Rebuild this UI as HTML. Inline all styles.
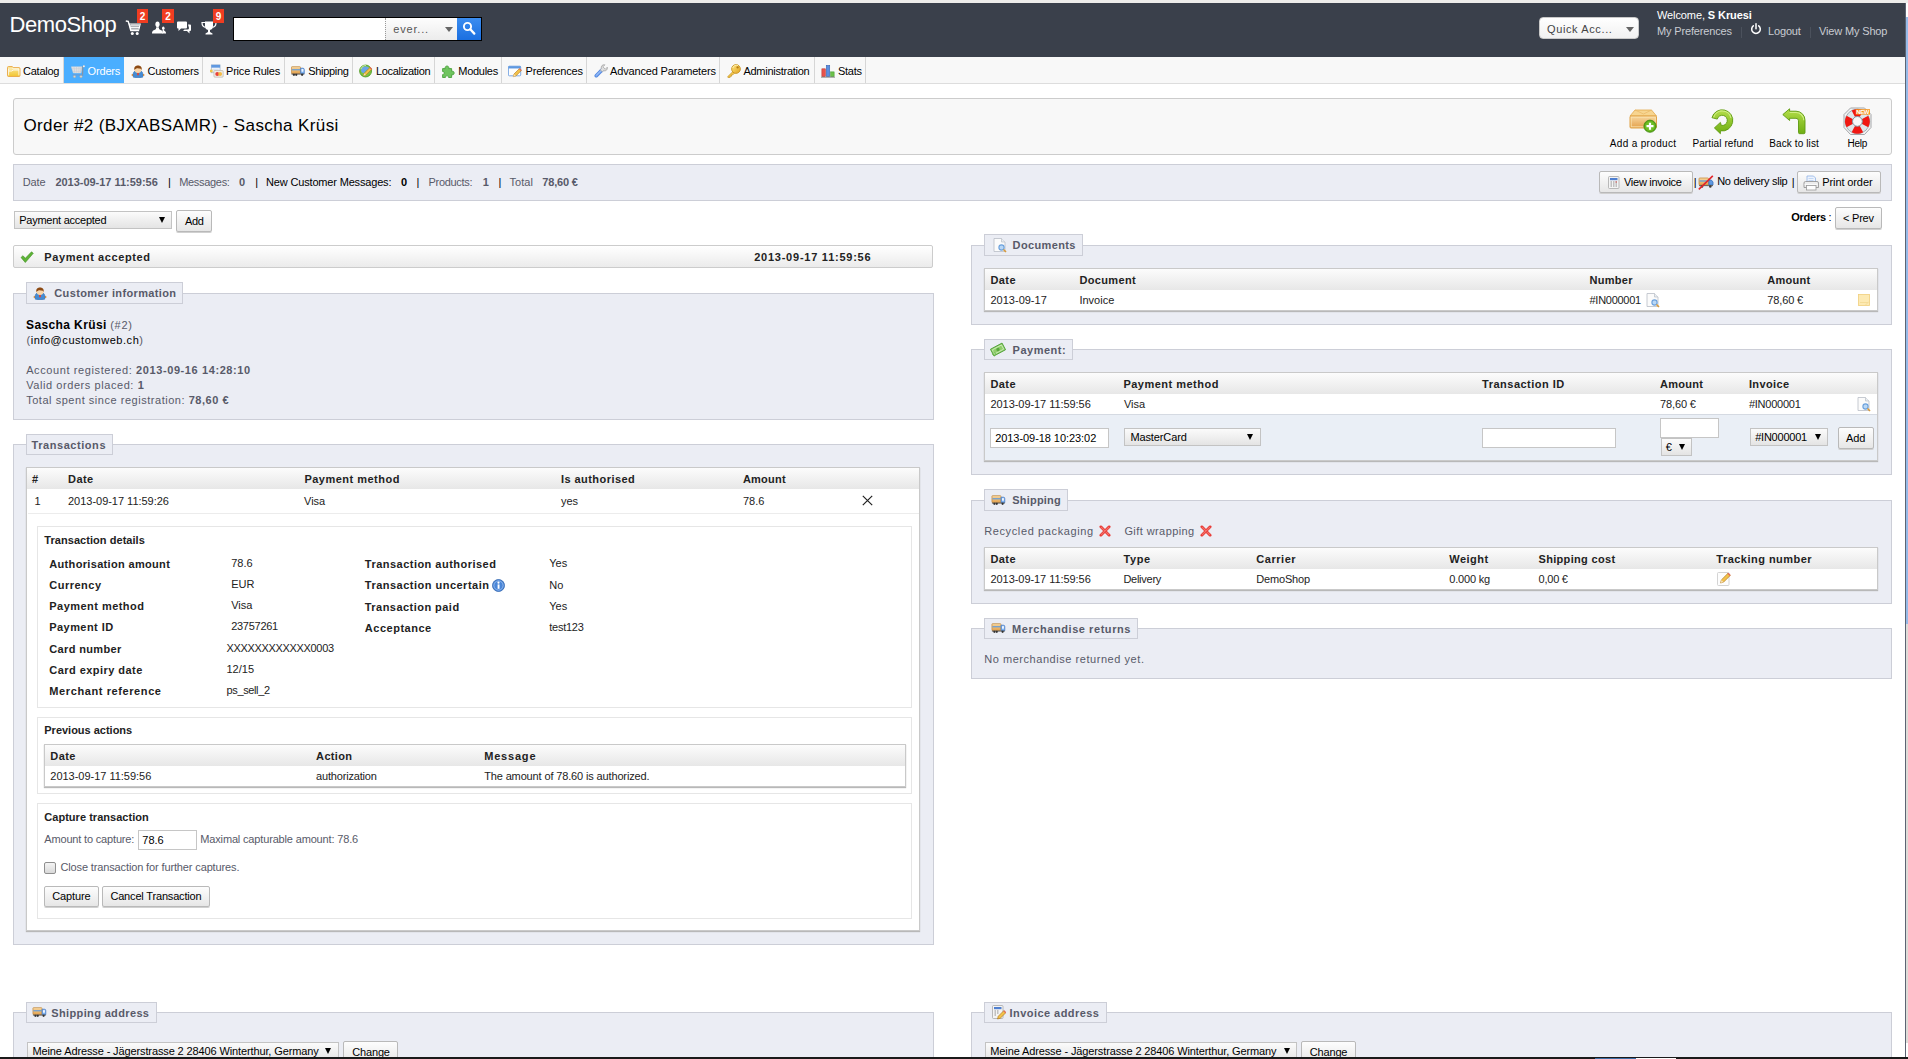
<!DOCTYPE html>
<html>
<head>
<meta charset="utf-8">
<title>Orders - DemoShop</title>
<style>
html,body{margin:0;padding:0}
html{width:1908px;height:1059px;overflow:hidden}
body{width:1908px;height:1059px;overflow:hidden;position:relative;background:#fff;font-family:"Liberation Sans",sans-serif;font-size:12px;color:#000;line-height:1}
*{box-sizing:border-box}
.a{position:absolute}
.t{position:absolute;white-space:nowrap;line-height:14px}
b{font-weight:bold}
/* frame */
#topband{left:0;top:0;width:1908px;height:3px;background:#edecea}
#botband{left:0;top:1057px;width:1908px;height:2px;background:#1a1a1a;z-index:50}
#sbline{left:1905px;top:3px;width:1px;height:1054px;background:#5c6573;z-index:40}
#sbthumb{left:1906px;top:17px;width:2px;height:607px;background:#96bae8;z-index:40}
#sbtrack{left:1906px;top:3px;width:2px;height:1054px;background:#dedcd8;z-index:39}
#sbtop{left:1906px;top:3px;width:2px;height:14px;background:#fff;z-index:41}
#sbbot{left:1906px;top:1043px;width:2px;height:14px;background:#fff;z-index:41}
/* header */
#header{left:0;top:3px;width:1905px;height:54px;background:#3a404b}
#shopname{left:9px;top:11px;font-size:23px;line-height:28px;color:#fff;letter-spacing:-0.9px}
.badge{background:#f03d21;color:#fff;font-weight:bold;font-size:10px;line-height:16px;text-align:center;width:11px;height:14px}
#search{left:233px;top:17px;width:249px;height:24px;background:#fff;border:1px solid #000}
#searchsel{left:385px;top:18px;width:72px;height:22px;background:linear-gradient(#fdfdfd,#ececec);border-left:1px dotted #999}
#searchbtn{left:457px;top:18px;width:24px;height:22px;background:linear-gradient(#3b8df0,#1a6fe0)}
#quick{left:1539px;top:17px;width:100px;height:22px;background:linear-gradient(#fff,#f1f1f1);border:1px solid #c9c9c9;border-radius:4px}
.hl{color:#c9ccd2;font-size:11px;letter-spacing:-0.15px}
/* nav */
#nav{left:0;top:57px;width:1905px;height:27px;background:#f8f8f8;border-bottom:1px solid #dddddd}
.tab{position:absolute;top:57px;height:26px;border-right:1px solid #d4d4d4}
.tab span{position:absolute;top:7px;font-size:12px;line-height:14px;letter-spacing:-0.45px;white-space:nowrap;color:#000}
.tab svg{position:absolute;top:5px}
.nv{}
/* boxes */
.box{position:absolute;background:#ebedf4;border:1px solid #ccced7}
.legend{position:absolute;background:#ebedf4;border:1px solid #ccced7;height:22px}
.legend span{position:absolute;top:3px;font-size:13px;line-height:15px;font-weight:bold;color:#585a69;white-space:nowrap}
.tbl{position:absolute;background:#fff;border:1px solid #c9c9c9;box-shadow:0 1px 1px #b8b8b8}
.th{position:absolute;left:0;top:0;right:0;height:22px;background:linear-gradient(#fbfbfb,#e8e8e8)}
.th span{position:absolute;top:5px;font-weight:bold;font-size:12px;line-height:14px;color:#222;white-space:nowrap}
.td{position:absolute;font-size:11px;line-height:13px;color:#222;white-space:nowrap}
.gt{color:#585a69}
.btn{position:absolute;background:linear-gradient(#fdfdfd,#e6e6e6);border:1px solid #b9b9b9;border-radius:2px;font-size:11px;color:#000;text-align:center;white-space:nowrap;box-shadow:0 1px 0 #d0d0d0}
.sel{position:absolute;background:linear-gradient(#fbfbfb,#e4e4e4);border:1px solid #c3c3c3;font-size:11px;color:#000;white-space:nowrap}
.sel i{position:absolute;right:5px;top:5px;width:0;height:0;border-left:4px solid transparent;border-right:4px solid transparent;border-top:7px solid #000}
.inp{position:absolute;background:#fff;border:1px solid #c6c6c6;font-size:11px;color:#000;white-space:nowrap}
.sub{position:absolute;background:#fff;border:1px solid #e6e6e6}
</style>
</head>
<body>
<div id="wrap" style="position:absolute;left:0;top:0;width:1908px;height:1059px;overflow:hidden">
<svg width="0" height="0" style="position:absolute;left:-10px;top:-10px">
<defs>
<linearGradient id="gFold" x1="0" y1="0" x2="0" y2="1"><stop offset="0" stop-color="#fbe9a0"/><stop offset="1" stop-color="#f2c530"/></linearGradient>
<linearGradient id="gBox" x1="0" y1="0" x2="0" y2="1"><stop offset="0" stop-color="#f8d8a2"/><stop offset="1" stop-color="#e3a04a"/></linearGradient>
<linearGradient id="gGreen" x1="0" y1="0" x2="0" y2="1"><stop offset="0" stop-color="#b4de4a"/><stop offset="1" stop-color="#6fae12"/></linearGradient>
<linearGradient id="gKey" x1="0" y1="0" x2="1" y2="1"><stop offset="0" stop-color="#ffe680"/><stop offset="1" stop-color="#e0a321"/></linearGradient>
<linearGradient id="gWr" x1="0" y1="0" x2="1" y2="1"><stop offset="0" stop-color="#c6dbf3"/><stop offset="1" stop-color="#5b8fd4"/></linearGradient>
<linearGradient id="gTh" x1="0" y1="0" x2="0" y2="1"><stop offset="0" stop-color="#fbfbfb"/><stop offset="1" stop-color="#e8e8e8"/></linearGradient>

<!-- folder -->
<symbol id="i-folder" viewBox="0 0 14 11">
<path d="M0.500 1.500 Q0.500 0.500 1.500 0.500 H5.300 L6.300 1.600 H12 Q13 1.600 13 2.600 V9.500 Q13 10.500 12 10.500 H1.500 Q0.500 10.500 0.500 9.500 Z" fill="url(#gFold)" stroke="#e9a746" stroke-width=".9"/>
<path d="M1.600 9.400 V2.800 H11.900 V9.400" fill="none" stroke="#ffffff" stroke-width=".9" opacity=".9"/>
<path d="M1.800 5 H5 L6 4 H11.800" fill="none" stroke="#ffffff" stroke-width=".9" opacity=".9"/>
<path d="M2 2.200 H5" stroke="#fbe08a" stroke-width=".8"/>
</symbol>
<!-- cart (menu) -->
<symbol id="i-cart" viewBox="0 0 14 13">
<path d="M0.300 1.800 H11 L10 8 H2.300 Z" fill="#e6e7e9" stroke="#cdd0d4" stroke-width=".5"/>
<path d="M0.800 3.400 H10.700 M1.300 5 H10.400 M1.800 6.600 H10.200 M3 2 L3.800 8 M5.500 2 L5.800 8 M8 2 L7.800 8 M10 2 L9.300 8" stroke="#c2c6cc" stroke-width=".5" fill="none"/>
<path d="M13.600 0.700 L11.900 1.700 L11.500 10.600" fill="none" stroke="#8793a1" stroke-width="1.200"/>
<circle cx="12.900" cy="1.300" r="1" fill="#f3f1ee"/>
<path d="M1.500 9.200 H11.600 V10.500 H1.500 Z" fill="#6a9cd6" opacity=".85"/>
<circle cx="3.500" cy="11.600" r="1.200" fill="#ddd6cb" stroke="#a9a399" stroke-width=".4"/>
<circle cx="10" cy="11.600" r="1.200" fill="#ddd6cb" stroke="#a9a399" stroke-width=".4"/>
</symbol>
<!-- user -->
<symbol id="i-user" viewBox="0 0 14 13">
<circle cx="1.600" cy="10" r="1.100" fill="#f0922a"/><circle cx="12.400" cy="10" r="1.100" fill="#f0922a"/>
<path d="M2.300 12.200 C1.500 9 2.500 6.600 4 6 H10 C11.500 6.600 12.500 9 11.700 12.200 Q7 13.200 2.300 12.200 Z" fill="#468bd2" stroke="#2e6db2" stroke-width=".5"/>
<path d="M6.400 6.300 H7.600 L8 9.500 L7 10.800 L6 9.500 Z" fill="#d94a3c"/>
<circle cx="7" cy="4.300" r="3.600" fill="#f8d5aa"/>
<path d="M3.400 4.900 C2.800 1.500 5 0.400 7 0.400 C9 0.400 11.200 1.500 10.600 4.900 C10 3.700 9 3.300 8 3.700 C7 2.900 5 3.100 3.400 4.900 Z" fill="#8c4a14"/>
</symbol>
<!-- price rules -->
<symbol id="i-price" viewBox="0 0 16 16">
<rect x="1.500" y="1" width="10" height="9" fill="#f4f7fb" stroke="#9fb3cc" stroke-width=".8"/>
<rect x="1.500" y="1" width="10" height="3.200" fill="#5f98e0"/>
<path d="M3 6h7M3 8h7" stroke="#c9d6e6" stroke-width=".8"/>
<rect x="0" y="6.500" width="3" height="3" fill="#f0c64a"/>
<rect x="4.500" y="7.500" width="10.500" height="7.500" rx="1" fill="#f2efe9" stroke="#b8b1a5" stroke-width=".8"/>
<circle cx="8.300" cy="11.300" r="2.300" fill="#e8413a"/>
<circle cx="11.500" cy="11.300" r="2.300" fill="#f4b536" opacity=".9"/>
</symbol>
<!-- lorry -->
<symbol id="i-lorry" viewBox="0 0 16 16">
<rect x="0.500" y="3" width="10.300" height="8" rx=".8" fill="url(#gBox)" stroke="#c08a44" stroke-width=".8"/>
<path d="M1 6.600h9.300" stroke="#5b9be0" stroke-width="1.300"/>
<path d="M11 4.800 h2.600 a1.600 1.600 0 0 1 1.600 1.600 v4.600 h-4.200z" fill="#7db1f0" stroke="#3f74be" stroke-width=".8"/>
<rect x="12" y="5.800" width="2.200" height="3" rx=".4" fill="#eef6ff"/>
<rect x="0.500" y="11" width="14.700" height="1" fill="#4a4a4a"/>
<circle cx="3.300" cy="12.300" r="1.300" fill="#333"/><circle cx="6" cy="12.300" r="1.300" fill="#333"/><circle cx="12.700" cy="12.300" r="1.300" fill="#333"/>
</symbol>
<!-- world + pencil -->
<symbol id="i-world" viewBox="0 0 16 16">
<circle cx="7.500" cy="8" r="6.800" fill="#7cc242" stroke="#4e9a22" stroke-width="1"/>
<path d="M3 5 c2 -3 7 -3 9 0 c-1 2 -3 1 -4 3 s-2 3 -4 2 s-2 -3 -1 -5z" fill="#6aa5e6"/>
<path d="M2 6 c1 -3 4 -4.500 6 -4.500" stroke="#d9f2b8" stroke-width="1" fill="none"/>
<path d="M5 13.500 l1 -3 l6.500 -6.500 l2 2 l-6.500 6.500z" fill="#f3c24a" stroke="#b07a1e" stroke-width=".7"/>
<path d="M5 13.500 l1 -3 l2 2z" fill="#f6dfb5"/>
<path d="M12.500 4 l2 2" stroke="#e36b5a" stroke-width="1.500"/>
</symbol>
<!-- puzzle -->
<symbol id="i-puzzle" viewBox="0 0 14 13">
<path d="M0.600 3.600 H3.300 C2.200 0.200 7.800 0.200 6.700 3.600 H9.600 V6.300 C13 5.200 13 10.800 9.600 9.700 V12.500 H6.600 C7.400 10.300 2.600 10.300 3.400 12.500 H0.600 V9.600 C2.700 10.400 2.700 5.700 0.600 6.500 Z" fill="#6fc45f" stroke="#49a13c" stroke-width=".9" stroke-linejoin="round"/>
</symbol>
<!-- preferences -->
<symbol id="i-prefs" viewBox="0 0 16 16">
<rect x="0.500" y="2.500" width="14" height="11" rx="1" fill="#fdfdfd" stroke="#6e9fe0" stroke-width="1"/>
<rect x="0.500" y="2.500" width="14" height="2.600" fill="#5f98e0"/>
<path d="M6 14.500 l.8 -3 l6.200 -6.200 l2.200 2.200 l-6.200 6.200z" fill="#f3c24a" stroke="#b07a1e" stroke-width=".7"/>
<path d="M6 14.500 l.8 -3 l2.200 2.200z" fill="#f6dfb5"/>
<path d="M13 5.300 l2.200 2.200" stroke="#e36b5a" stroke-width="1.500"/>
</symbol>
<!-- wrench -->
<symbol id="i-wrench" viewBox="0 0 14 14">
<path d="M2.300 11.700 L8.200 5.800" stroke="#4f83dc" stroke-width="3.600" stroke-linecap="round"/>
<path d="M2.300 11.700 L8.200 5.800" stroke="#6fa0ee" stroke-width="2.400" stroke-linecap="round"/>
<path d="M2.600 11 L7.600 6" stroke="#b5d0f8" stroke-width=".9" stroke-linecap="round"/>
<path d="M13.300 3.200 L11.300 5.200 L8.900 2.800 L10.900 0.800 C8.600 0.200 6.600 2.200 7.300 4.600 L6.200 5.700 L8.400 7.900 L9.500 6.800 C11.900 7.500 13.900 5.500 13.300 3.200 Z" fill="#dedede" stroke="#9c9c9c" stroke-width=".7" stroke-linejoin="round"/>
</symbol>
<!-- key -->
<symbol id="i-key" viewBox="0 0 14 14">
<path d="M6 7.400 L0.900 12.500 V13.400 H3.100 V12.200 H4.500 V10.800 H5.900 L7.600 9.100 Z" fill="#f3c84c" stroke="#c48f1d" stroke-width=".7" stroke-linejoin="round"/>
<circle cx="9" cy="5" r="4.400" fill="url(#gKey)" stroke="#c48f1d" stroke-width=".8"/>
<path d="M5.800 4 A3.600 3.600 0 0 1 11 1.700" fill="none" stroke="#fff3b8" stroke-width=".9"/>
<circle cx="10.600" cy="3.400" r="1.150" fill="#b57c12"/>
</symbol>
<!-- chart bars -->
<symbol id="i-chart" viewBox="0 0 16 16">
<rect x="1" y="5.500" width="4" height="9" fill="#e8524c" stroke="#b8322c" stroke-width=".6"/>
<rect x="6" y="1.500" width="4" height="13" fill="#5a8fe0" stroke="#355fae" stroke-width=".6"/>
<rect x="11" y="9" width="4" height="5.500" fill="#6cc04a" stroke="#3f9a2a" stroke-width=".6"/>
<path d="M0 15 h16" stroke="#777" stroke-width="1"/>
</symbol>

<!-- add product (32x26) origin 1628,108 -->
<symbol id="i-addprod" viewBox="0 0 32 26">
<path d="M7 2 h16.500 l5 6 h-26.500z" fill="#f7d590" stroke="#e2a84c" stroke-width=".8"/>
<path d="M7 2 l8.500 4 l8 -4" fill="none" stroke="#e9b866" stroke-width=".7"/>
<rect x="2" y="8" width="26.500" height="12" rx="1" fill="url(#gBox)" stroke="#e0a346" stroke-width="1"/>
<rect x="3.200" y="9.200" width="24" height="9.600" fill="none" stroke="#fbe3b0" stroke-width=".8"/>
<circle cx="22" cy="18.200" r="6.100" fill="#5aa817" stroke="#3f8a0e" stroke-width=".8"/>
<circle cx="22" cy="18.200" r="5" fill="#6fbe24"/>
<path d="M22 14.700v7M18.500 18.200h7" stroke="#fff" stroke-width="2.200"/>
</symbol>
<!-- partial refund (28x28) origin 1708,107 -->
<symbol id="i-refund" viewBox="0 0 28 28">
<path d="M3.960 10.660 A10.600 10.600 0 1 1 12.360 23.840 L12.400 26.700 L6.400 20.900 L12.400 15.400 L13.310 18.420 A5.100 5.100 0 1 0 9.270 12.080 Z" fill="url(#gGreen)" stroke="#5e9a10" stroke-width=".9" stroke-linejoin="round"/>
<path d="M5.600 10.300 A9 9 0 0 1 23 11" fill="none" stroke="#d8f392" stroke-width="1.100" opacity=".85"/>
</symbol>
<!-- back to list (28x28) origin 1780,107 -->
<symbol id="i-back" viewBox="0 0 28 28">
<path d="M2.800 7.600 L9.600 1.800 V4.200 H16 A9 9 0 0 1 25 13.200 V25.500 A1.200 1.200 0 0 1 23.800 26.700 H19.700 A1.200 1.200 0 0 1 18.500 25.500 V13.800 A2.500 2.500 0 0 0 16 11.300 H9.600 V13.500 Z" fill="url(#gGreen)" stroke="#5e9a10" stroke-width=".9" stroke-linejoin="round"/>
<path d="M9.600 5.500 H16 A7.700 7.700 0 0 1 23.700 13.200" fill="none" stroke="#d8f392" stroke-width="1.100" opacity=".85"/>
</symbol>
<!-- help (29x28) origin 1843,107 -->
<symbol id="i-help" viewBox="0 0 29 28">
<path d="M7.500 1 H21.500 L28 7.500 V20.500 L21.500 27.500 H7.500 L1 20.500 V7.500 Z" fill="#f3f3f3" stroke="#a4a6a9" stroke-width="1" stroke-linejoin="round"/>
<circle cx="14.400" cy="14.400" r="12.300" fill="#dfe6e9" stroke="#8fa3ab" stroke-width=".8"/>
<g fill="#f01812">
<path d="M14.4 14.4 L25.26 8.63 A12.3 12.3 0 0 1 25.26 20.17z"/>
<path d="M14.4 14.4 L20.17 25.26 A12.3 12.3 0 0 1 8.63 25.26z"/>
<path d="M14.4 14.4 L3.54 20.17 A12.3 12.3 0 0 1 3.54 8.63z"/>
<path d="M14.4 14.4 L8.63 3.54 A12.3 12.3 0 0 1 20.17 3.54z"/>
</g>
<circle cx="14.400" cy="14.400" r="4.900" fill="#f8f8f8" stroke="#7f9ea9" stroke-width="1"/>
<rect x="12.700" y="2.200" width="14.300" height="5.400" fill="#f7941d"/>
<text x="13.300" y="7" font-family="Liberation Sans" font-weight="bold" font-size="6" fill="#fff" textLength="13">NEW</text>
</symbol>
<!-- calculator/invoice small (12x13) -->
<symbol id="i-calc" viewBox="0 0 12 13">
<rect x=".5" y=".5" width="10.500" height="12" rx="1" fill="#f4f4f4" stroke="#aaa" stroke-width=".8"/>
<rect x="2" y="2" width="7.500" height="2.200" fill="#4f7fd0"/>
<path d="M2.500 6h1.500M5 6h1.500M7.500 6h1.500M2.500 8h1.500M5 8h1.500M7.500 8h1.500M2.500 10h1.500M5 10h1.500M7.500 10h1.500" stroke="#8d8d8d" stroke-width="1.200"/>
<path d="M7.500 6h1.500" stroke="#d9534f" stroke-width="1.200"/>
</symbol>
<!-- lorry with red slash (16x15) -->
<symbol id="i-nolorry" viewBox="0 0 16 15">
<rect x="1" y="3" width="9.500" height="7" rx=".8" fill="url(#gBox)" stroke="#c98d3c" stroke-width=".8"/>
<path d="M1.500 6h8.500" stroke="#5b9be0" stroke-width="1.200"/>
<path d="M10.800 5 h2.500 l1.700 2 v3 h-4.200z" fill="#5e99e2" stroke="#3a6fb8" stroke-width=".8"/>
<rect x="1" y="10.200" width="14" height=".9" fill="#555"/>
<circle cx="4" cy="11.500" r="1.300" fill="#3b3b3b"/><circle cx="12.300" cy="11.500" r="1.300" fill="#3b3b3b"/>
<path d="M.8 14.300 L14.800 .8" stroke="#e3262b" stroke-width="1.600"/>
</symbol>
<!-- printer 16 -->
<symbol id="i-printer" viewBox="0 0 16 16">
<path d="M4 1 h6.500 l2 2 v5 h-8.500z" fill="#eef4fd" stroke="#8fb2e6" stroke-width=".8"/>
<path d="M5.500 3.500h5M5.500 5.500h5" stroke="#b8d0f2" stroke-width=".8"/>
<path d="M1 8 a1.500 1.500 0 0 1 1.500 -1.500 h11.500 a1.500 1.500 0 0 1 1.500 1.500 v4.500 h-14.500z" fill="#ededed" stroke="#8d8d8d" stroke-width=".8"/>
<rect x="3.500" y="10.500" width="9.500" height="4.500" fill="#fdfdfd" stroke="#9a9a9a" stroke-width=".8"/>
<path d="M1.500 9.500h13" stroke="#fff" stroke-width=".7"/>
</symbol>

<!-- green check 14x12 -->
<symbol id="i-check" viewBox="0 0 14 12">
<path d="M1 6.500 l2 -1.800 l2.300 2.600 l6.200 -6.500 l1.800 1.500 l-8 9.200z" fill="#5db336" stroke="#3f8f22" stroke-width=".6" stroke-linejoin="round"/>
</symbol>
<!-- thin black close X -->
<symbol id="i-close" viewBox="0 0 11 11" preserveAspectRatio="none">
<path d="M.8 .8 L10.200 10.200 M10.200 .8 L.8 10.200" stroke="#222" stroke-width="1.200"/>
</symbol>
<!-- info -->
<symbol id="i-info" viewBox="0 0 13 13">
<circle cx="6.500" cy="6.500" r="6" fill="#4a86d8" stroke="#2f63ad" stroke-width=".8"/>
<circle cx="6.500" cy="6.500" r="4.600" fill="none" stroke="#a9c9f2" stroke-width=".7"/>
<rect x="5.600" y="5.400" width="1.900" height="4.400" fill="#fff"/><circle cx="6.500" cy="3.700" r="1.100" fill="#fff"/>
</symbol>

<!-- page with magnifier 14x15 -->
<symbol id="i-pagefind" viewBox="0 0 14 15">
<path d="M1 .5 h7.500 l3.500 3.500 v9.500 h-11z" fill="#fbfbfb" stroke="#b9bec6" stroke-width=".8"/>
<path d="M8.500 .5 v3.500 h3.500" fill="#e9edf2" stroke="#b9bec6" stroke-width=".7"/>
<circle cx="8.500" cy="9.500" r="2.600" fill="#b9d7f5" stroke="#6aa0dc" stroke-width="1.100"/>
<path d="M10.500 11.500 l2.500 2.500" stroke="#d89a3c" stroke-width="1.600"/>
</symbol>
<!-- note -->
<symbol id="i-note" viewBox="0 0 12 12">
<rect x=".5" y=".5" width="11" height="11" fill="#fdeab3" stroke="#f0cf7c" stroke-width=".8"/>
<path d="M2 8.500 h8 M7.500 11 l3.500 -3.500" stroke="#f5dc98" stroke-width="1"/>
</symbol>
<!-- money -->
<symbol id="i-money" viewBox="0 0 16 16">
<g transform="rotate(-28 8 8)">
<rect x="1" y="4" width="14" height="8" fill="#8fce6a" stroke="#4f9e36" stroke-width=".9"/>
<rect x="2.500" y="5.500" width="11" height="5" fill="none" stroke="#d6f0c4" stroke-width=".8"/>
<circle cx="8" cy="8" r="1.800" fill="#5aa83e"/>
</g>
<path d="M1.500 12.500 l3 2.500 M3 10.500 l3.500 3" stroke="#6db74e" stroke-width="1"/>
</symbol>
<!-- red X -->
<symbol id="i-redx" viewBox="0 0 13 13">
<path d="M2 2 L11 11 M11 2 L2 11" stroke="#e83b36" stroke-width="3" stroke-linecap="round"/>
<path d="M2.500 2.500 L10.500 10.500 M10.500 2.500 L2.500 10.500" stroke="#f4716a" stroke-width="1.200" stroke-linecap="round"/>
</symbol>
<!-- pencil on page -->
<symbol id="i-pencil" viewBox="0 0 14 15">
<rect x=".5" y="1.500" width="11.500" height="13" rx="1" fill="#fdfdfd" stroke="#c9c9c9" stroke-width=".8"/>
<path d="M3.500 12 l.9 -3.100 l6.600 -6.600 l2.200 2.200 l-6.600 6.600z" fill="#f3c24a" stroke="#b07a1e" stroke-width=".7"/>
<path d="M3.500 12 l.9 -3.100 l2.200 2.200z" fill="#f6dfb5"/>
<path d="M11 2.300 l2.200 2.200" stroke="#e36b5a" stroke-width="1.400"/>
</symbol>
<!-- invoice edit -->
<symbol id="i-invedit" viewBox="0 0 14 15">
<rect x=".5" y=".5" width="10.500" height="13" rx="1" fill="#f4f4f4" stroke="#aaa" stroke-width=".8"/>
<rect x="2" y="2" width="7.500" height="2.200" fill="#4f7fd0"/>
<path d="M2.500 6h1.500M5 6h1.500M2.500 8h1.500M5 8h1.500M2.500 10h1.500" stroke="#8d8d8d" stroke-width="1.200"/>
<path d="M5.500 14 l.8 -2.800 l5.500 -5.500 l2 2 l-5.500 5.500z" fill="#f3c24a" stroke="#b07a1e" stroke-width=".7"/>
<path d="M11.800 5.700 l2 2" stroke="#e36b5a" stroke-width="1.400"/>
</symbol>
<!--MORE-SYMBOLS-->



</defs>
</svg>
<!-- window frame -->
<div id="topband" class="a"></div>
<div id="header" class="a"></div>
<div id="nav" class="a"></div>

<!-- HEADER CONTENT -->
<div class="t" style="left:9.4px;top:11px;font-size:22px;color:#fff;letter-spacing:-0.39px;line-height:28px;">DemoShop</div>
<!-- header notification icons -->
<svg class="a" style="left:125px;top:20px" width="16" height="16" viewBox="0 0 16 16"><path d="M0.800 1 L3.200 1.300 L5.800 10.600 H14.200" fill="none" stroke="#fff" stroke-width="1.400"/><path d="M4.400 4 H15.200 L14 9.200 H5.800 Z" fill="none" stroke="#fff" stroke-width="1.100"/><path d="M7 4v5.200M9 4v5.200M11 4v5.200M13 4v5.200M4.800 5.800h10M5.300 7.500h9.200" stroke="#fff" stroke-width=".9"/><circle cx="7.300" cy="13.600" r="1.500" fill="#fff"/><circle cx="12.200" cy="13.600" r="1.500" fill="#fff"/></svg>
<div class="a badge" style="left:137px;top:9px">2</div>
<svg class="a" style="left:151px;top:20px" width="16" height="16" viewBox="0 0 16 16"><ellipse cx="6.500" cy="4.300" rx="2.100" ry="2.800" fill="#fff"/><path d="M1 13.400 C1 10.600 3 10.200 4.800 9.300 L5.300 7.300 H7.700 L8.200 9.300 C10 10.200 12 10.600 12 13.400 Z" fill="#fff"/><ellipse cx="12.300" cy="8.300" rx="1.300" ry="1.700" fill="#fff"/><path d="M11.200 13.400 C11.800 12 11.200 11 11.700 10 H12.900 C13.200 11 15.100 11.300 15.100 13.400 Z" fill="#fff"/></svg>
<div class="a badge" style="left:162px;top:9px;width:12px">2</div>
<svg class="a" style="left:176px;top:21px" width="16" height="14" viewBox="0 0 16 14"><path d="M1 1.500a1 1 0 0 1 1-1h8a1 1 0 0 1 1 1v5a1 1 0 0 1-1 1h-5l-2.500 2.500v-2.500h-.5a1 1 0 0 1-1-1z" fill="#fff"/><path d="M12 3.500h2a1 1 0 0 1 1 1v4.500a1 1 0 0 1-1 1h-.5v2.500l-2.500-2.500h-4l1.500-1.500h3a1.500 1.500 0 0 0 1.500-1.500z" fill="#fff"/></svg>
<svg class="a" style="left:201px;top:20px" width="16" height="16" viewBox="0 0 16 16"><path d="M4 1.500h8v4.500a4 4 0 0 1-8 0z" fill="#fff"/><path d="M4 2.500h-3c0 3 1.500 4.500 3.500 5M12 2.500h3c0 3-1.500 4.500-3.500 5" fill="none" stroke="#fff" stroke-width="1.200"/><path d="M7 9.500h2v2.500l2.500 1.500v1h-7v-1l2.500-1.500z" fill="#fff"/></svg>
<div class="a badge" style="left:213px;top:9px">9</div>

<div id="search" class="a"></div>
<div id="searchsel" class="a"></div>
<div class="t" style="left:393.2px;top:22px;font-size:11px;color:#555;letter-spacing:0.82px;">ever...</div>
<div class="a" style="left:445px;top:27px;width:0;height:0;border-left:4px solid transparent;border-right:4px solid transparent;border-top:5px solid #666"></div>
<div id="searchbtn" class="a"></div>
<svg class="a" style="left:462px;top:21px" width="14" height="15" viewBox="0 0 14 15"><circle cx="5.500" cy="5.500" r="3.600" fill="none" stroke="#fff" stroke-width="1.900"/><path d="M8.300 8.300l4 4.300" stroke="#fff" stroke-width="2.300" stroke-linecap="round"/></svg>
<div id="quick" class="a"></div>
<div class="t" style="left:1547.0px;top:22px;font-size:11px;color:#444;letter-spacing:0.62px;">Quick Acc...</div>
<div class="a" style="left:1626px;top:27px;width:0;height:0;border-left:4px solid transparent;border-right:4px solid transparent;border-top:5px solid #666"></div>
<div class="t" style="left:1657px;top:8px;font-size:11px;color:#fff;letter-spacing:-0.1px">Welcome, <b>S Kruesi</b></div>
<div class="t hl" style="left:1657px;top:24px">My Preferences</div>
<div class="a" style="left:1741px;top:27px;width:1px;height:11px;background:#4b515c"></div>
<svg class="a" style="left:1750px;top:23px" width="12" height="13" viewBox="0 0 12 13"><path d="M3.300 2.800a4.300 4.300 0 1 0 5.400 0" fill="none" stroke="#fff" stroke-width="1.500" stroke-linecap="round"/><path d="M6 0.800v5" stroke="#fff" stroke-width="1.500" stroke-linecap="round"/></svg>
<div class="t hl" style="left:1768px;top:24px">Logout</div>
<div class="a" style="left:1810px;top:27px;width:1px;height:11px;background:#4b515c"></div>
<div class="t hl" style="left:1819px;top:24px">View My Shop</div>
<!-- NAV TABS -->
<div class="a" style="left:64px;top:57px;width:60px;height:26px;background:#4aaeff"></div>
<svg class="a" style="left:6.5px;top:65.7px" width="14" height="11"><use href="#i-folder"/></svg><div class="t nv" style="left:23.0px;top:64px;font-size:11px;color:#000;letter-spacing:-0.24px;text-shadow:0 1px 0 #fff;">Catalog</div>
<div class="a" style="left:63px;top:57px;width:1px;height:26px;background:#d6d6d6"></div>
<svg class="a" style="left:71px;top:64.5px" width="14" height="13"><use href="#i-cart"/></svg><div class="t nv" style="left:87.6px;top:64px;font-size:11px;color:#fff;letter-spacing:-0.18px;text-shadow:none;">Orders</div>
<svg class="a" style="left:131px;top:64.5px" width="14" height="13"><use href="#i-user"/></svg><div class="t nv" style="left:147.4px;top:64px;font-size:11px;color:#000;letter-spacing:-0.20px;text-shadow:0 1px 0 #fff;">Customers</div>
<div class="a" style="left:202px;top:57px;width:1px;height:26px;background:#d6d6d6"></div>
<svg class="a" style="left:209.6px;top:64px" width="14" height="14"><use href="#i-price"/></svg><div class="t nv" style="left:226.0px;top:64px;font-size:11px;color:#000;letter-spacing:-0.20px;text-shadow:0 1px 0 #fff;">Price Rules</div>
<div class="a" style="left:284px;top:57px;width:1px;height:26px;background:#d6d6d6"></div>
<svg class="a" style="left:290.5px;top:64px" width="14" height="14"><use href="#i-lorry"/></svg><div class="t nv" style="left:308.2px;top:64px;font-size:11px;color:#000;letter-spacing:-0.29px;text-shadow:0 1px 0 #fff;">Shipping</div>
<div class="a" style="left:352px;top:57px;width:1px;height:26px;background:#d6d6d6"></div>
<svg class="a" style="left:359.3px;top:64px" width="14" height="14"><use href="#i-world"/></svg><div class="t nv" style="left:376.0px;top:64px;font-size:11px;color:#000;letter-spacing:-0.32px;text-shadow:0 1px 0 #fff;">Localization</div>
<div class="a" style="left:434px;top:57px;width:1px;height:26px;background:#d6d6d6"></div>
<svg class="a" style="left:441.5px;top:64.5px" width="14" height="13"><use href="#i-puzzle"/></svg><div class="t nv" style="left:458.3px;top:64px;font-size:11px;color:#000;letter-spacing:-0.28px;text-shadow:0 1px 0 #fff;">Modules</div>
<div class="a" style="left:501px;top:57px;width:1px;height:26px;background:#d6d6d6"></div>
<svg class="a" style="left:508px;top:64px" width="14" height="14"><use href="#i-prefs"/></svg><div class="t nv" style="left:525.5px;top:64px;font-size:11px;color:#000;letter-spacing:-0.18px;text-shadow:0 1px 0 #fff;">Preferences</div>
<div class="a" style="left:586px;top:57px;width:1px;height:26px;background:#d6d6d6"></div>
<svg class="a" style="left:593.5px;top:64px" width="14" height="14"><use href="#i-wrench"/></svg><div class="t nv" style="left:610.0px;top:64px;font-size:11px;color:#000;letter-spacing:-0.16px;text-shadow:0 1px 0 #fff;">Advanced Parameters</div>
<div class="a" style="left:719px;top:57px;width:1px;height:26px;background:#d6d6d6"></div>
<svg class="a" style="left:726.8px;top:64px" width="14" height="14"><use href="#i-key"/></svg><div class="t nv" style="left:743.4px;top:64px;font-size:11px;color:#000;letter-spacing:-0.26px;text-shadow:0 1px 0 #fff;">Administration</div>
<div class="a" style="left:814px;top:57px;width:1px;height:26px;background:#d6d6d6"></div>
<svg class="a" style="left:820.8px;top:64px" width="14" height="14"><use href="#i-chart"/></svg><div class="t nv" style="left:838.0px;top:64px;font-size:11px;color:#000;letter-spacing:-0.27px;text-shadow:0 1px 0 #fff;">Stats</div>
<div class="a" style="left:865px;top:57px;width:1px;height:26px;background:#d6d6d6"></div>
<!-- CONTENT TOP -->
<div class="a" style="left:13px;top:98px;width:1879px;height:57px;background:#f8f8f8;border:1px solid #cccccc;border-radius:3px"></div>
<div class="t" style="left:23.4px;top:116px;font-size:17px;color:#000;letter-spacing:0.40px;line-height:20px;">Order #2 (BJXABSAMR) - Sascha Krüsi</div>
<svg class="a" style="left:1628px;top:108px" width="32" height="26"><use href="#i-addprod"/></svg>
<div class="t" style="left:1609.8px;top:137px;font-size:10px;color:#000;letter-spacing:0.33px;">Add a product</div>
<svg class="a" style="left:1708px;top:107px" width="28" height="28"><use href="#i-refund"/></svg>
<div class="t" style="left:1692.4px;top:137px;font-size:10px;color:#000;letter-spacing:0.11px;">Partial refund</div>
<svg class="a" style="left:1780px;top:107px" width="28" height="28"><use href="#i-back"/></svg>
<div class="t" style="left:1769.2px;top:137px;font-size:10px;color:#000;letter-spacing:0.12px;">Back to list</div>
<svg class="a" style="left:1843px;top:107px" width="29" height="28"><use href="#i-help"/></svg>
<div class="t" style="left:1847.5px;top:137px;font-size:10px;color:#000;letter-spacing:-0.26px;">Help</div>
<div class="a" style="left:13px;top:164px;width:1879px;height:37px;background:#ebedf4;border:1px solid #ccced7"></div>
<div class="t" style="left:22.8px;top:175px;font-size:11px;color:#585a69;letter-spacing:-0.14px;">Date</div>
<div class="t" style="left:55.4px;top:175px;font-size:11px;font-weight:bold;color:#585a69;letter-spacing:-0.02px;">2013-09-17 11:59:56</div>
<div class="t" style="left:168.0px;top:175px;font-size:11px;color:#000;">|</div>
<div class="t" style="left:179.2px;top:175px;font-size:11px;color:#585a69;letter-spacing:-0.31px;">Messages:</div>
<div class="t" style="left:239.0px;top:175px;font-size:11px;font-weight:bold;color:#585a69;">0</div>
<div class="t" style="left:255.2px;top:175px;font-size:11px;color:#000;">|</div>
<div class="t" style="left:266.1px;top:175px;font-size:11px;color:#000;letter-spacing:-0.17px;">New Customer Messages:</div>
<div class="t" style="left:401.0px;top:175px;font-size:11px;font-weight:bold;color:#000;">0</div>
<div class="t" style="left:416.5px;top:175px;font-size:11px;color:#000;">|</div>
<div class="t" style="left:428.5px;top:175px;font-size:11px;color:#585a69;letter-spacing:-0.31px;">Products:</div>
<div class="t" style="left:482.8px;top:175px;font-size:11px;font-weight:bold;color:#585a69;">1</div>
<div class="t" style="left:498.5px;top:175px;font-size:11px;color:#000;">|</div>
<div class="t" style="left:509.4px;top:175px;font-size:11px;color:#585a69;letter-spacing:0.09px;">Total</div>
<div class="t" style="left:542.3px;top:175px;font-size:11px;font-weight:bold;color:#585a69;letter-spacing:-0.18px;">78,60 €</div>
<div class="btn" style="left:1599px;top:171px;width:94px;height:22px;"></div>
<svg class="a" style="left:1608px;top:176px" width="12" height="13"><use href="#i-calc"/></svg>
<div class="t" style="left:1624.0px;top:175px;font-size:11px;color:#000;letter-spacing:-0.27px;">View invoice</div>
<div class="t" style="left:1693.8px;top:175px;font-size:11px;color:#000;">|</div>
<svg class="a" style="left:1698px;top:175px" width="16" height="15"><use href="#i-nolorry"/></svg>
<div class="t" style="left:1717.2px;top:174px;font-size:11px;color:#000;letter-spacing:-0.27px;">No delivery slip</div>
<div class="t" style="left:1791.8px;top:175px;font-size:11px;color:#000;">|</div>
<div class="btn" style="left:1797px;top:171px;width:84px;height:22px;"></div>
<svg class="a" style="left:1803px;top:175px" width="16" height="16"><use href="#i-printer"/></svg>
<div class="t" style="left:1822.3px;top:175px;font-size:11px;color:#000;letter-spacing:-0.11px;">Print order</div>
<div class="sel" style="left:14px;top:211px;width:158px;height:18px;"></div>
<div class="t" style="left:19.3px;top:213px;font-size:11px;color:#000;letter-spacing:-0.26px;">Payment accepted</div>
<div class="a" style="left:159px;top:217px;width:8px;height:6px;background:none;width:0;height:0;border-left:3.500px solid transparent;border-right:3.500px solid transparent;border-top:6px solid #000"></div>
<div class="btn" style="left:176px;top:210px;width:36px;height:22px;"></div>
<div class="t" style="left:185.0px;top:214px;font-size:11px;color:#000;letter-spacing:-0.34px;">Add</div>
<div class="t" style="left:1791.3px;top:210px;font-size:11px;color:#000;letter-spacing:-0.27px;"><span style="font-weight:bold;">Orders</span> :</div>
<div class="btn" style="left:1835px;top:207px;width:47px;height:22px;"></div>
<div class="t" style="left:1843.0px;top:211px;font-size:11px;color:#000;letter-spacing:-0.22px;">&lt; Prev</div>
<!-- LEFT COLUMN -->
<div class="a" style="left:13px;top:245px;width:920px;height:23px;background:linear-gradient(#ffffff,#ebebeb);border:1px solid #cccccc;border-radius:2px"></div>
<svg class="a" style="left:20px;top:251px" width="14" height="12"><use href="#i-check"/></svg>
<div class="t" style="left:44.3px;top:250px;font-size:11px;font-weight:bold;color:#222;letter-spacing:0.61px;">Payment accepted</div>
<div class="t" style="left:754.2px;top:250px;font-size:11px;font-weight:bold;color:#222;letter-spacing:0.76px;">2013-09-17 11:59:56</div>
<div class="box" style="left:13px;top:293px;width:921px;height:127px;"></div>
<div class="legend" style="left:26px;top:282px;width:157px;height:22px;"></div>
<svg class="a" style="left:33px;top:286.5px" width="14" height="13"><use href="#i-user"/></svg>
<div class="t" style="left:54.3px;top:286px;font-size:11px;font-weight:bold;color:#585a69;letter-spacing:0.36px;">Customer information</div>
<div class="t" style="left:26.0px;top:318px;font-size:12px;font-weight:bold;color:#000;letter-spacing:0.39px;">Sascha Krüsi</div>
<div class="t" style="left:110.2px;top:318px;font-size:11px;color:#585a69;letter-spacing:0.71px;">(#2)</div>
<div class="t" style="left:26.4px;top:333px;font-size:11px;color:#000;letter-spacing:0.56px;"><span style="color:#585a69;">(</span><span style="color:#000;">info@customweb.ch</span><span style="color:#585a69;">)</span></div>
<div class="t" style="left:26.2px;top:363px;font-size:11px;color:#585a69;letter-spacing:0.60px;">Account registered: <span style="font-weight:bold;">2013-09-16 14:28:10</span></div>
<div class="t" style="left:26.2px;top:378px;font-size:11px;color:#585a69;letter-spacing:0.57px;">Valid orders placed: <span style="font-weight:bold;">1</span></div>
<div class="t" style="left:26.2px;top:393px;font-size:11px;color:#585a69;letter-spacing:0.53px;">Total spent since registration: <span style="font-weight:bold;">78,60 €</span></div>
<div class="box" style="left:13px;top:444px;width:921px;height:501px;"></div>
<div class="legend" style="left:26px;top:434px;width:87px;height:21px;"></div>
<div class="t" style="left:31.5px;top:438px;font-size:11px;font-weight:bold;color:#585a69;letter-spacing:0.56px;">Transactions</div>
<div class="tbl" style="left:26px;top:467px;width:894px;height:464px;"></div>
<div class="a" style="left:27px;top:468px;width:892px;height:21px;background:linear-gradient(#fcfcfc,#e7e7e7)"></div>
<div class="t" style="left:31.9px;top:472px;font-size:11px;font-weight:bold;color:#222;letter-spacing:0.50px;">#</div>
<div class="t" style="left:68.1px;top:472px;font-size:11px;font-weight:bold;color:#222;letter-spacing:0.39px;">Date</div>
<div class="t" style="left:304.4px;top:472px;font-size:11px;font-weight:bold;color:#222;letter-spacing:0.49px;">Payment method</div>
<div class="t" style="left:561.0px;top:472px;font-size:11px;font-weight:bold;color:#222;letter-spacing:0.44px;">Is authorised</div>
<div class="t" style="left:742.9px;top:472px;font-size:11px;font-weight:bold;color:#222;letter-spacing:0.25px;">Amount</div>
<div class="a" style="left:28px;top:513px;width:891px;height:1px;background:#ececec"></div>
<div class="t" style="left:34.6px;top:494px;font-size:11px;color:#222;">1</div>
<div class="t" style="left:68.0px;top:494px;font-size:11px;color:#222;letter-spacing:-0.02px;">2013-09-17 11:59:26</div>
<div class="t" style="left:304.0px;top:494px;font-size:11px;color:#222;">Visa</div>
<div class="t" style="left:561.0px;top:494px;font-size:11px;color:#222;">yes</div>
<div class="t" style="left:743.0px;top:494px;font-size:11px;color:#222;">78.6</div>
<svg class="a" style="left:861.5px;top:495.3px" width="11" height="11"><use href="#i-close"/></svg>
<div class="sub" style="left:37px;top:526px;width:875px;height:182px;"></div>
<div class="t" style="left:44.3px;top:533px;font-size:11px;font-weight:bold;color:#222;letter-spacing:0.05px;">Transaction details</div>
<div class="t" style="left:49.3px;top:557px;font-size:11px;font-weight:bold;color:#222;letter-spacing:0.33px;">Authorisation amount</div>
<div class="t" style="left:231.2px;top:556px;font-size:11px;color:#222;">78.6</div>
<div class="t" style="left:49.3px;top:578px;font-size:11px;font-weight:bold;color:#222;letter-spacing:0.49px;">Currency</div>
<div class="t" style="left:231.2px;top:577px;font-size:11px;color:#222;">EUR</div>
<div class="t" style="left:49.3px;top:599px;font-size:11px;font-weight:bold;color:#222;letter-spacing:0.46px;">Payment method</div>
<div class="t" style="left:231.2px;top:598px;font-size:11px;color:#222;">Visa</div>
<div class="t" style="left:49.3px;top:620px;font-size:11px;font-weight:bold;color:#222;letter-spacing:0.43px;">Payment ID</div>
<div class="t" style="left:231.2px;top:619px;font-size:11px;color:#222;letter-spacing:-0.28px;">23757261</div>
<div class="t" style="left:49.3px;top:642px;font-size:11px;font-weight:bold;color:#222;letter-spacing:0.36px;">Card number</div>
<div class="t" style="left:226.5px;top:641px;font-size:11px;color:#222;letter-spacing:-0.33px;">XXXXXXXXXXXX0003</div>
<div class="t" style="left:49.3px;top:663px;font-size:11px;font-weight:bold;color:#222;letter-spacing:0.45px;">Card expiry date</div>
<div class="t" style="left:226.5px;top:662px;font-size:11px;color:#222;">12/15</div>
<div class="t" style="left:49.3px;top:684px;font-size:11px;font-weight:bold;color:#222;letter-spacing:0.60px;">Merchant reference</div>
<div class="t" style="left:226.5px;top:683px;font-size:11px;color:#222;letter-spacing:-0.37px;">ps_sell_2</div>
<div class="t" style="left:364.8px;top:557px;font-size:11px;font-weight:bold;color:#222;letter-spacing:0.48px;">Transaction authorised</div>
<div class="t" style="left:549.3px;top:556px;font-size:11px;color:#222;">Yes</div>
<div class="t" style="left:364.8px;top:578px;font-size:11px;font-weight:bold;color:#222;letter-spacing:0.49px;">Transaction uncertain</div>
<div class="t" style="left:549.3px;top:578px;font-size:11px;color:#222;">No</div>
<div class="t" style="left:364.8px;top:600px;font-size:11px;font-weight:bold;color:#222;letter-spacing:0.46px;">Transaction paid</div>
<div class="t" style="left:549.3px;top:599px;font-size:11px;color:#222;">Yes</div>
<div class="t" style="left:364.8px;top:621px;font-size:11px;font-weight:bold;color:#222;letter-spacing:0.52px;">Acceptance</div>
<div class="t" style="left:549.3px;top:620px;font-size:11px;color:#222;letter-spacing:-0.26px;">test123</div>
<svg class="a" style="left:492px;top:579px" width="13" height="13"><use href="#i-info"/></svg>
<div class="sub" style="left:37px;top:717px;width:875px;height:77px;"></div>
<div class="t" style="left:44.3px;top:723px;font-size:11px;font-weight:bold;color:#222;letter-spacing:-0.01px;">Previous actions</div>
<div class="tbl" style="left:44px;top:744px;width:862px;height:43px;"></div>
<div class="a" style="left:45px;top:745px;width:860px;height:21px;background:linear-gradient(#fcfcfc,#e7e7e7)"></div>
<div class="t" style="left:50.3px;top:749px;font-size:11px;font-weight:bold;color:#222;letter-spacing:0.39px;">Date</div>
<div class="t" style="left:316.1px;top:749px;font-size:11px;font-weight:bold;color:#222;letter-spacing:0.34px;">Action</div>
<div class="t" style="left:484.2px;top:749px;font-size:11px;font-weight:bold;color:#222;letter-spacing:0.81px;">Message</div>
<div class="t" style="left:50.3px;top:769px;font-size:11px;color:#222;letter-spacing:-0.02px;">2013-09-17 11:59:56</div>
<div class="t" style="left:316.1px;top:769px;font-size:11px;color:#222;letter-spacing:-0.19px;">authorization</div>
<div class="t" style="left:484.2px;top:769px;font-size:11px;color:#222;letter-spacing:-0.14px;">The amount of 78.60 is authorized.</div>
<div class="sub" style="left:37px;top:803px;width:875px;height:116px;"></div>
<div class="t" style="left:44.3px;top:810px;font-size:11px;font-weight:bold;color:#222;letter-spacing:0.03px;">Capture transaction</div>
<div class="t" style="left:44.3px;top:832px;font-size:11px;color:#585a69;letter-spacing:-0.17px;">Amount to capture:</div>
<div class="inp" style="left:138px;top:830px;width:59px;height:20px;"></div>
<div class="t" style="left:142.3px;top:833px;font-size:11px;color:#000;">78.6</div>
<div class="t" style="left:200.3px;top:832px;font-size:11px;color:#585a69;letter-spacing:-0.16px;">Maximal capturable amount: 78.6</div>
<div class="a" style="left:44px;top:862px;width:12px;height:12px;background:linear-gradient(#f4f4f4,#d9d9d9);border:1px solid #8f8f8f;border-radius:2px"></div>
<div class="t" style="left:60.4px;top:860px;font-size:11px;color:#585a69;letter-spacing:-0.13px;">Close transaction for further captures.</div>
<div class="btn" style="left:44px;top:886px;width:55px;height:21px;"></div>
<div class="t" style="left:52.3px;top:889px;font-size:11px;color:#000;letter-spacing:-0.14px;">Capture</div>
<div class="btn" style="left:102px;top:886px;width:108px;height:21px;"></div>
<div class="t" style="left:110.4px;top:889px;font-size:11px;color:#000;letter-spacing:-0.17px;">Cancel Transaction</div>
<div class="box" style="left:13px;top:1012px;width:921px;height:58px;"></div>
<div class="legend" style="left:26px;top:1002px;width:131px;height:21px;"></div>
<svg class="a" style="left:32px;top:1005px" width="15" height="14"><use href="#i-lorry"/></svg>
<div class="t" style="left:51.3px;top:1006px;font-size:11px;font-weight:bold;color:#585a69;letter-spacing:0.36px;">Shipping address</div>
<div class="sel" style="left:27px;top:1042px;width:312px;height:20px;"></div>
<div class="t" style="left:32.5px;top:1044px;font-size:11px;color:#000;letter-spacing:-0.12px;">Meine Adresse - Jägerstrasse 2 28406 Winterthur, Germany</div>
<div class="a" style="left:325px;top:1048px;width:7px;height:6px;background:none;width:0;height:0;border-left:3.5px solid transparent;border-right:3.5px solid transparent;border-top:6px solid #000"></div>
<div class="btn" style="left:343px;top:1041px;width:55px;height:23px;"></div>
<div class="t" style="left:352.3px;top:1045px;font-size:11px;color:#000;letter-spacing:-0.17px;">Change</div>
<!-- RIGHT COLUMN -->
<div class="box" style="left:971px;top:245px;width:921px;height:80px;"></div>
<div class="legend" style="left:984px;top:234px;width:99px;height:22px;"></div>
<svg class="a" style="left:993px;top:238px" width="14" height="15"><use href="#i-pagefind"/></svg>
<div class="t" style="left:1012.6px;top:238px;font-size:11px;font-weight:bold;color:#585a69;letter-spacing:0.36px;">Documents</div>
<div class="tbl" style="left:984px;top:268px;width:894px;height:43px;"></div>
<div class="a" style="left:985px;top:269px;width:892px;height:21px;background:linear-gradient(#fcfcfc,#e7e7e7)"></div>
<div class="t" style="left:990.5px;top:273px;font-size:11px;font-weight:bold;color:#222;letter-spacing:0.39px;">Date</div>
<div class="t" style="left:1079.4px;top:273px;font-size:11px;font-weight:bold;color:#222;letter-spacing:0.37px;">Document</div>
<div class="t" style="left:1589.5px;top:273px;font-size:11px;font-weight:bold;color:#222;letter-spacing:0.29px;">Number</div>
<div class="t" style="left:1767.3px;top:273px;font-size:11px;font-weight:bold;color:#222;letter-spacing:0.25px;">Amount</div>
<div class="t" style="left:990.5px;top:293px;font-size:11px;color:#222;">2013-09-17</div>
<div class="t" style="left:1079.4px;top:293px;font-size:11px;color:#222;">Invoice</div>
<div class="t" style="left:1589.5px;top:293px;font-size:11px;color:#222;letter-spacing:-0.27px;">#IN000001</div>
<svg class="a" style="left:1646px;top:293px" width="14" height="15"><use href="#i-pagefind"/></svg>
<div class="t" style="left:1767.3px;top:293px;font-size:11px;color:#222;letter-spacing:-0.13px;">78,60 €</div>
<svg class="a" style="left:1858px;top:294px" width="12" height="12"><use href="#i-note"/></svg>
<div class="box" style="left:971px;top:349px;width:921px;height:126px;"></div>
<div class="legend" style="left:984px;top:339px;width:89px;height:21px;"></div>
<svg class="a" style="left:990px;top:342px" width="16" height="15"><use href="#i-money"/></svg>
<div class="t" style="left:1012.6px;top:343px;font-size:11px;font-weight:bold;color:#585a69;letter-spacing:0.50px;">Payment:</div>
<div class="tbl" style="left:984px;top:372px;width:894px;height:89px;"></div>
<div class="a" style="left:985px;top:373px;width:892px;height:21px;background:linear-gradient(#fcfcfc,#e7e7e7)"></div>
<div class="t" style="left:990.5px;top:377px;font-size:11px;font-weight:bold;color:#222;letter-spacing:0.39px;">Date</div>
<div class="t" style="left:1123.4px;top:377px;font-size:11px;font-weight:bold;color:#222;letter-spacing:0.49px;">Payment method</div>
<div class="t" style="left:1482.1px;top:377px;font-size:11px;font-weight:bold;color:#222;letter-spacing:0.49px;">Transaction ID</div>
<div class="t" style="left:1660.0px;top:377px;font-size:11px;font-weight:bold;color:#222;letter-spacing:0.25px;">Amount</div>
<div class="t" style="left:1748.9px;top:377px;font-size:11px;font-weight:bold;color:#222;letter-spacing:0.40px;">Invoice</div>
<div class="t" style="left:990.5px;top:397px;font-size:11px;color:#222;letter-spacing:-0.06px;">2013-09-17 11:59:56</div>
<div class="t" style="left:1123.9px;top:397px;font-size:11px;color:#222;">Visa</div>
<div class="t" style="left:1660.0px;top:397px;font-size:11px;color:#222;letter-spacing:-0.13px;">78,60 €</div>
<div class="t" style="left:1748.9px;top:397px;font-size:11px;color:#222;letter-spacing:-0.23px;">#IN000001</div>
<svg class="a" style="left:1857px;top:397px" width="14" height="15"><use href="#i-pagefind"/></svg>
<div class="a" style="left:985px;top:414px;width:892px;height:46px;background:#eaeff6;border-top:1px solid #d5dae2"></div>
<div class="inp" style="left:990px;top:428px;width:119px;height:20px;"></div>
<div class="t" style="left:995.2px;top:431px;font-size:11px;color:#000;letter-spacing:-0.06px;">2013-09-18 10:23:02</div>
<div class="sel" style="left:1124px;top:428px;width:137px;height:18px;"></div>
<div class="t" style="left:1130.4px;top:430px;font-size:11px;color:#000;letter-spacing:-0.11px;">MasterCard</div>
<div class="a" style="left:1247px;top:434px;width:0;height:0;border-left:3.5px solid transparent;border-right:3.5px solid transparent;border-top:6px solid #000"></div>
<div class="inp" style="left:1482px;top:428px;width:134px;height:20px;"></div>
<div class="inp" style="left:1660px;top:418px;width:59px;height:20px;"></div>
<div class="sel" style="left:1661px;top:438px;width:31px;height:18px;"></div>
<div class="t" style="left:1665.7px;top:440px;font-size:11px;color:#000;">€</div>
<div class="a" style="left:1679px;top:444px;width:0;height:0;border-left:3.5px solid transparent;border-right:3.5px solid transparent;border-top:6px solid #000"></div>
<div class="sel" style="left:1750px;top:428px;width:78px;height:18px;"></div>
<div class="t" style="left:1755.2px;top:430px;font-size:11px;color:#000;letter-spacing:-0.23px;">#IN000001</div>
<div class="a" style="left:1815px;top:434px;width:0;height:0;border-left:3.5px solid transparent;border-right:3.5px solid transparent;border-top:6px solid #000"></div>
<div class="btn" style="left:1838px;top:427px;width:36px;height:22px;"></div>
<div class="t" style="left:1845.9px;top:431px;font-size:11px;color:#000;letter-spacing:-0.09px;">Add</div>
<div class="box" style="left:971px;top:500px;width:921px;height:104px;"></div>
<div class="legend" style="left:984px;top:489px;width:84px;height:22px;"></div>
<svg class="a" style="left:991px;top:493px" width="15" height="14"><use href="#i-lorry"/></svg>
<div class="t" style="left:1012.3px;top:493px;font-size:11px;font-weight:bold;color:#585a69;letter-spacing:0.19px;">Shipping</div>
<div class="t" style="left:984.2px;top:524px;font-size:11px;color:#585a69;letter-spacing:0.62px;">Recycled packaging</div>
<svg class="a" style="left:1099px;top:525px" width="12" height="12"><use href="#i-redx"/></svg>
<div class="t" style="left:1124.4px;top:524px;font-size:11px;color:#585a69;letter-spacing:0.42px;">Gift wrapping</div>
<svg class="a" style="left:1200px;top:525px" width="12" height="12"><use href="#i-redx"/></svg>
<div class="tbl" style="left:984px;top:547px;width:894px;height:43px;"></div>
<div class="a" style="left:985px;top:548px;width:892px;height:21px;background:linear-gradient(#fcfcfc,#e7e7e7)"></div>
<div class="t" style="left:990.5px;top:552px;font-size:11px;font-weight:bold;color:#222;letter-spacing:0.39px;">Date</div>
<div class="t" style="left:1123.4px;top:552px;font-size:11px;font-weight:bold;color:#222;letter-spacing:0.65px;">Type</div>
<div class="t" style="left:1256.3px;top:552px;font-size:11px;font-weight:bold;color:#222;letter-spacing:0.54px;">Carrier</div>
<div class="t" style="left:1449.3px;top:552px;font-size:11px;font-weight:bold;color:#222;letter-spacing:0.49px;">Weight</div>
<div class="t" style="left:1538.5px;top:552px;font-size:11px;font-weight:bold;color:#222;letter-spacing:0.32px;">Shipping cost</div>
<div class="t" style="left:1716.3px;top:552px;font-size:11px;font-weight:bold;color:#222;letter-spacing:0.48px;">Tracking number</div>
<div class="t" style="left:990.5px;top:572px;font-size:11px;color:#222;letter-spacing:-0.06px;">2013-09-17 11:59:56</div>
<div class="t" style="left:1123.4px;top:572px;font-size:11px;color:#222;letter-spacing:-0.26px;">Delivery</div>
<div class="t" style="left:1256.3px;top:572px;font-size:11px;color:#222;letter-spacing:-0.19px;">DemoShop</div>
<div class="t" style="left:1449.3px;top:572px;font-size:11px;color:#222;letter-spacing:-0.19px;">0.000 kg</div>
<div class="t" style="left:1538.5px;top:572px;font-size:11px;color:#222;letter-spacing:-0.22px;">0,00 €</div>
<svg class="a" style="left:1717px;top:571px" width="14" height="15"><use href="#i-pencil"/></svg>
<div class="box" style="left:971px;top:628px;width:921px;height:51px;"></div>
<div class="legend" style="left:984px;top:618px;width:154px;height:21px;"></div>
<svg class="a" style="left:991px;top:621px" width="15" height="14"><use href="#i-lorry"/></svg>
<div class="t" style="left:1012.1px;top:622px;font-size:11px;font-weight:bold;color:#585a69;letter-spacing:0.56px;">Merchandise returns</div>
<div class="t" style="left:984.2px;top:652px;font-size:11px;color:#585a69;letter-spacing:0.55px;">No merchandise returned yet.</div>
<div class="box" style="left:971px;top:1012px;width:921px;height:58px;"></div>
<div class="legend" style="left:984px;top:1002px;width:123px;height:21px;"></div>
<svg class="a" style="left:992px;top:1005px" width="14" height="15"><use href="#i-invedit"/></svg>
<div class="t" style="left:1009.5px;top:1006px;font-size:11px;font-weight:bold;color:#585a69;letter-spacing:0.45px;">Invoice address</div>
<div class="sel" style="left:985px;top:1042px;width:312px;height:20px;"></div>
<div class="t" style="left:990.3px;top:1044px;font-size:11px;color:#000;letter-spacing:-0.12px;">Meine Adresse - Jägerstrasse 2 28406 Winterthur, Germany</div>
<div class="a" style="left:1284px;top:1048px;width:0;height:0;border-left:3.5px solid transparent;border-right:3.5px solid transparent;border-top:6px solid #000"></div>
<div class="btn" style="left:1301px;top:1041px;width:55px;height:23px;"></div>
<div class="t" style="left:1309.8px;top:1045px;font-size:11px;color:#000;letter-spacing:-0.17px;">Change</div>

<!-- scrollbar / frame overlays -->
<div id="sbtrack" class="a"></div>
<div id="sbthumb" class="a"></div>
<div id="sbtop" class="a"></div>
<div id="sbbot" class="a"></div>
<div id="sbline" class="a"></div>
<div id="botband" class="a"></div>
<div id="tb1" class="a" style="left:1595px;top:1058px;width:41px;height:1px;background:#3c6ea6;z-index:51"></div>
<div id="tb2" class="a" style="left:1636px;top:1058px;width:40px;height:1px;background:#fff;z-index:51"></div>
</div><!--wrap-->
</body>
</html>
